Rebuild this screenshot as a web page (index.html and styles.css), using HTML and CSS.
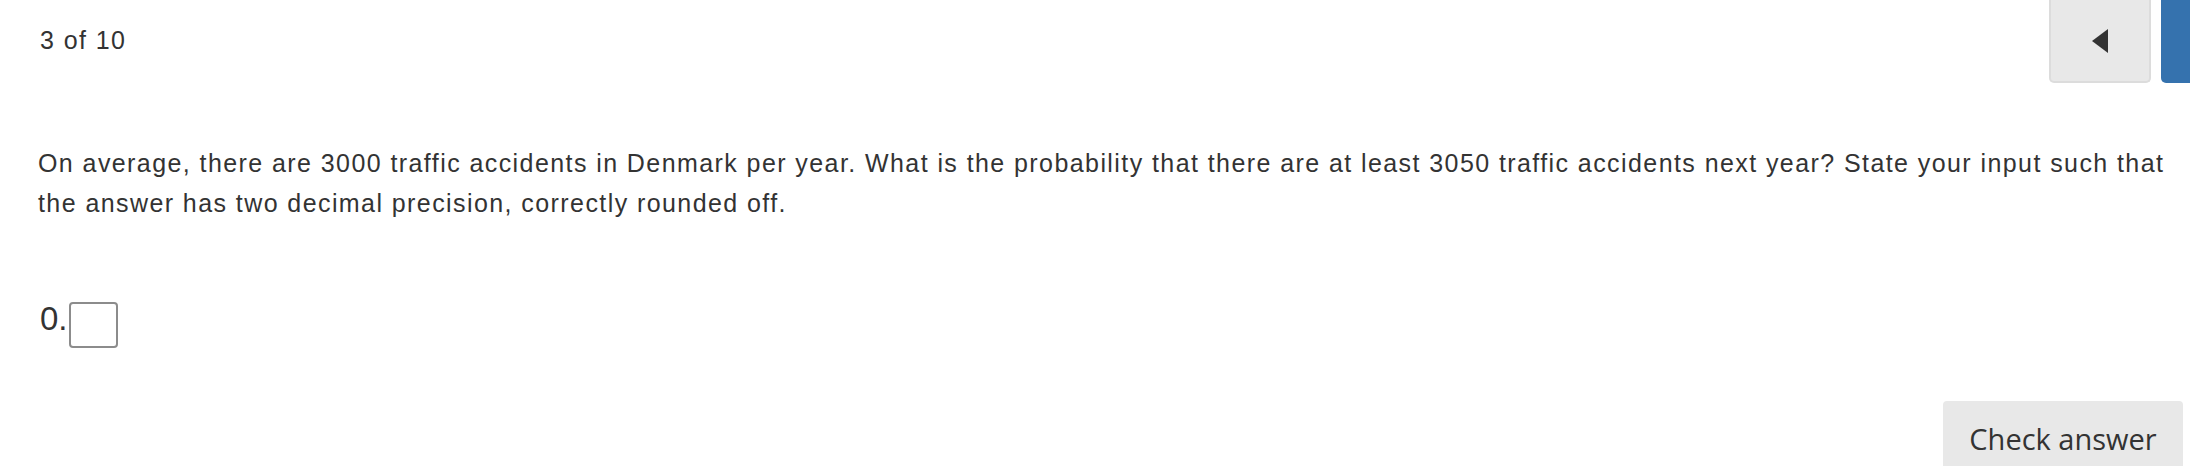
FILE: index.html
```html
<!DOCTYPE html>
<html>
<head>
<meta charset="utf-8">
<link rel="stylesheet" href="styles.css">
</head>
<body>
<div class="page">
  <header class="topbar">
    <div class="counter">3 of 10</div>
    <div class="nav">
      <button class="nav-btn prev" aria-label="Previous">
        <svg width="16" height="24" viewBox="0 0 16 24"><path d="M16 0 L16 24 L0 12 Z" fill="#333"/></svg>
      </button>
      <button class="nav-btn next" aria-label="Next"></button>
    </div>
  </header>
  <p class="question">On average, there are 3000 traffic accidents in Denmark per year. What is the probability that there are at least 3050 traffic accidents next year? State your input such that the answer has two decimal precision, correctly rounded off.</p>
  <div class="answer">
    <span class="prefix">0.</span><input class="answer-input" type="text">
  </div>
  <div class="actions">
    <button class="check-btn">Check answer</button>
  </div>
</div>
</body>
</html>
```

FILE: styles.css
```css
html, body {
  margin: 0;
  padding: 0;
  background: #fff;
  overflow: hidden;
}
.page {
  width: 2190px;
  height: 466px;
  box-sizing: border-box;
  padding-left: 38px;
  font-family: "Liberation Sans", Arial, sans-serif;
  color: #333;
}
.topbar {
  display: flex;
  justify-content: space-between;
  align-items: center;
  height: 83px;
}
.counter {
  font-size: 25px;
  letter-spacing: 1.4px;
  margin-left: 2px;
  padding-bottom: 2px;
}
.nav {
  display: flex;
  align-self: flex-start;
  gap: 10px;
}
.nav-btn {
  height: 83px;
  border: 2px solid #dcdcdc;
  border-top: none;
  border-radius: 0 0 5px 5px;
  padding: 0;
  margin: 0;
  display: flex;
  align-items: center;
  justify-content: center;
}
.prev {
  width: 102px;
  background: #e8e8e8;
}
.next {
  width: 29px;
  background: #3572ae;
  border-color: #3572ae;
  border-radius: 0 0 0 5px;
}
.question {
  margin: 60px 0 0 0;
  width: 2140px;
  font-size: 25px;
  letter-spacing: 1.42px;
  line-height: 40px;
}
.answer {
  margin-top: 79px;
  display: flex;
  align-items: flex-end;
  height: 46px;
}
.prefix {
  font-size: 33px;
  line-height: 1;
  margin-left: 2px;
  margin-bottom: 13px;
}
.answer-input {
  width: 49px;
  height: 46px;
  box-sizing: border-box;
  border: 2px solid #8c8c8c;
  border-radius: 4px;
  margin: 0 0 0 1px;
  padding: 0;
  background: #fff;
}
.actions {
  display: flex;
  justify-content: flex-end;
  margin-top: 53px;
  padding-right: 7px;
}
.check-btn {
  width: 240px;
  height: 80px;
  background: #e8e8e8;
  border: none;
  border-radius: 4px 4px 0 0;
  font-family: "Open Sans", "Noto Sans", sans-serif;
  font-size: 29px;
  color: #333;
  padding: 0 0 6px 0;
  margin: 0;
}
```
